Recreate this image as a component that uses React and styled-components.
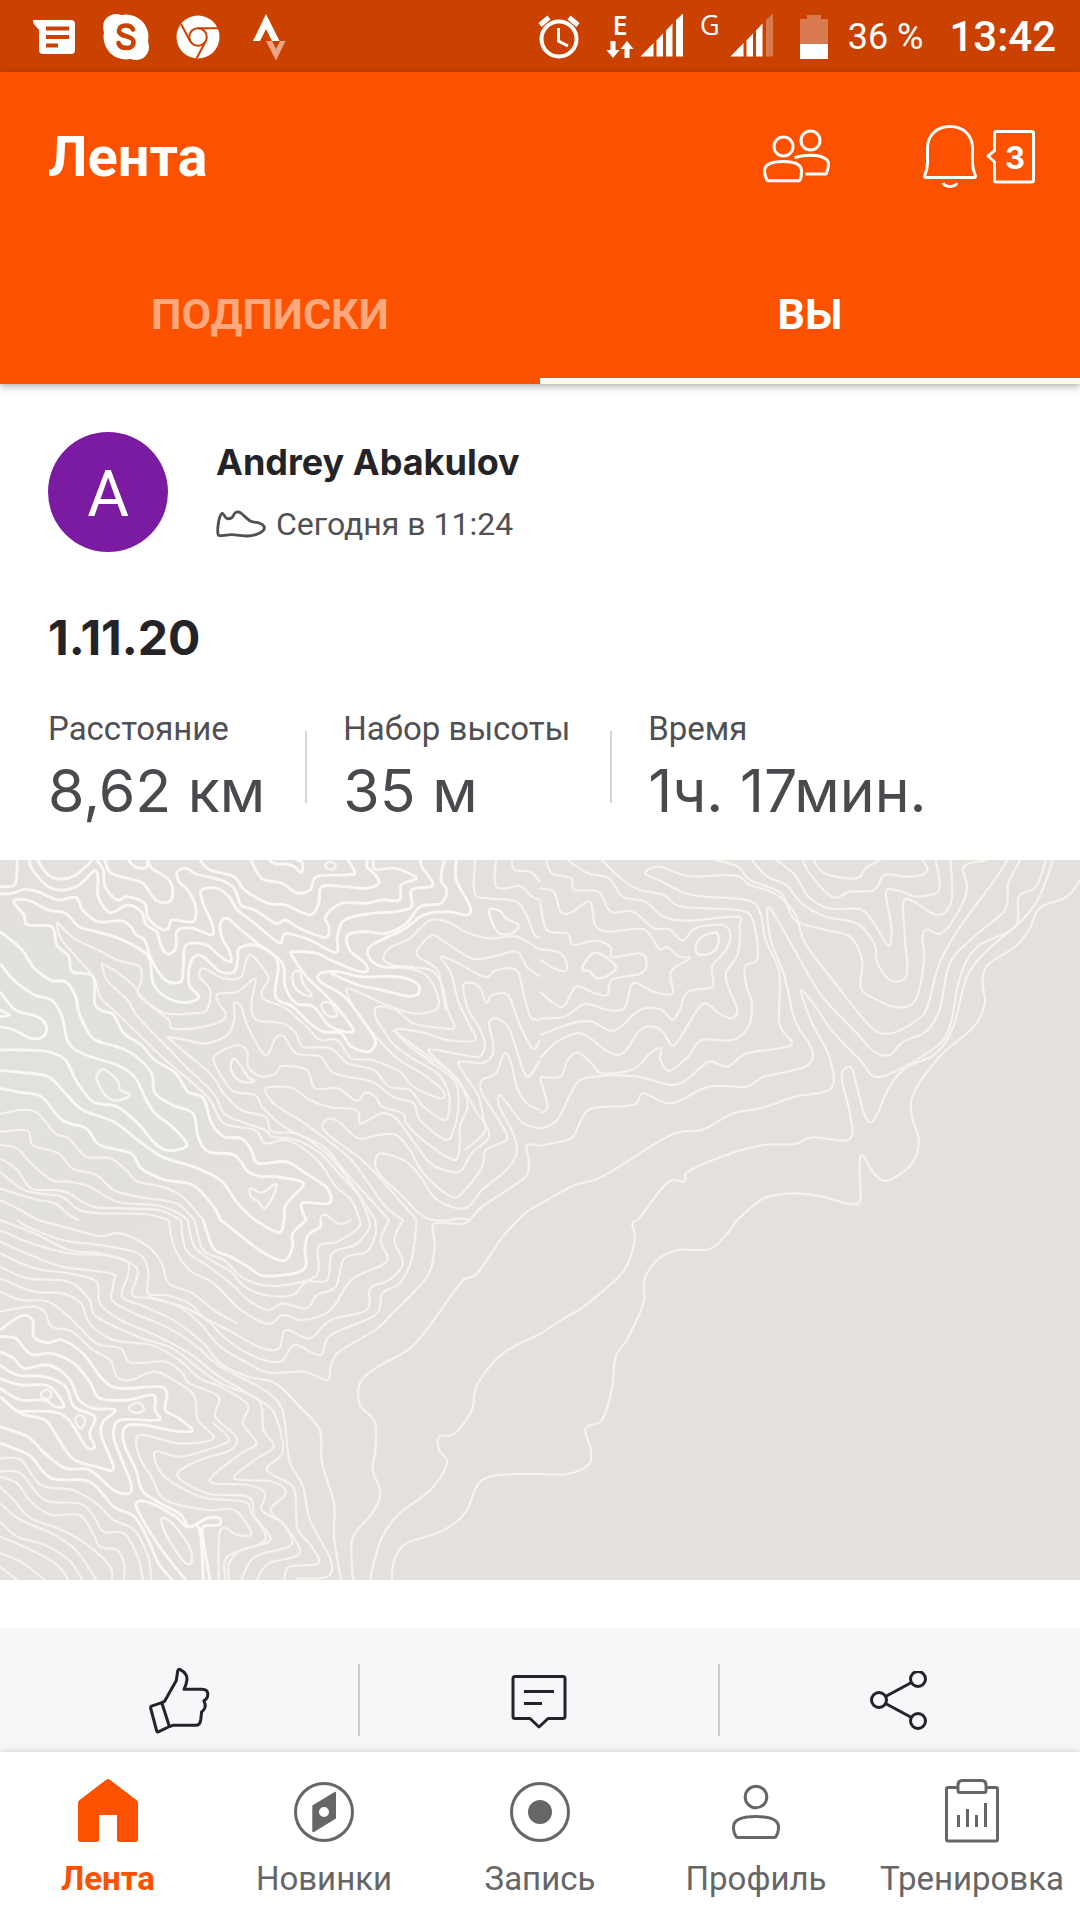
import React from "react";
import styled, { createGlobalStyle } from "styled-components";

const GlobalStyle = createGlobalStyle`
  * { box-sizing: border-box; }
  body {
    margin: 0;
    background: #ffffff;
    font-family: Roboto, "Noto Sans", sans-serif;
    color: #505054;
  }
  h1, h2, h3, p, dl, dd, dt { margin: 0; }
  button { border: 0; padding: 0; background: none; font: inherit; color: inherit; cursor: pointer; }
  a { color: inherit; text-decoration: none; }
  svg { display: block; flex: none; }
`;

const Screen = styled.div`
  display: flex;
  flex-direction: column;
  min-height: 100vh;
`;

/* ---------- status bar ---------- */

const StatusBar = styled.div`
  display: flex;
  align-items: center;
  justify-content: space-between;
  height: 72px;
  padding: 2px 24px 0 32px;
  background: #cb4200;
  color: #ffffff;
`;

const StatusGroup = styled.div`
  display: flex;
  align-items: center;
  gap: ${(p) => p.$gap}px;
`;

const Network = styled.div`
  display: flex;
  align-items: flex-start;
  gap: ${(p) => p.$gap}px;
  height: 48px;
`;

const NetworkType = styled.div`
  display: flex;
  flex-direction: column;
  align-items: center;
  gap: 4px;
  font: ${(p) => p.$weight} 27px/24px "Open Sans", sans-serif;
`;

const BatteryLevel = styled.span`
  font-size: 36px;
  line-height: 44px;
`;

const Clock = styled.time`
  font-size: 42px;
  font-weight: 500;
  line-height: 44px;
`;

/* ---------- app header ---------- */

const Header = styled.header`
  position: relative;
  background: #fc5200;
  color: #ffffff;
  box-shadow: 0 2px 8px rgba(0, 0, 0, 0.35);
`;

const Toolbar = styled.div`
  display: flex;
  align-items: center;
  justify-content: space-between;
  height: 168px;
  padding: 2px 44px 0 48px;
`;

const Title = styled.h1`
  font-size: 56px;
  font-weight: 700;
  line-height: 64px;
`;

const ToolbarActions = styled.div`
  display: flex;
  align-items: center;
  gap: 90px;
`;

const ToolbarButton = styled.button`
  display: flex;
  align-items: center;
  gap: 8px;
`;

const Badge = styled.span`
  display: grid;
  place-items: center;
  > * { grid-area: 1 / 1; }
`;

const BadgeCount = styled.span`
  padding: 2px 0 0 8px;
  font: 700 31px/36px Inter, sans-serif;
`;

const Tabs = styled.div`
  display: flex;
`;

const Tab = styled.button`
  flex: 1;
  height: 144px;
  padding-top: 10px;
  font-size: 43px;
  font-weight: 700;
  line-height: 48px;
  color: ${(p) => (p.$active ? "#ffffff" : "#ffa87e")};
  border-bottom: 6px solid ${(p) => (p.$active ? "#ffffff" : "transparent")};
`;

/* ---------- activity ---------- */

const Activity = styled.article`
  display: flex;
  flex-direction: column;
  flex: 1;
`;

const Athlete = styled.div`
  display: flex;
  align-items: center;
  gap: 48px;
  padding: 48px 48px 0;
`;

const Avatar = styled.div`
  display: grid;
  place-items: center;
  width: 120px;
  height: 120px;
  border-radius: 50%;
  background: #7b1ba2;
  color: #ffffff;
  font-size: 64px;
  line-height: 64px;
  padding-top: 6px;
`;

const AthleteText = styled.div`
  display: flex;
  flex-direction: column;
  gap: 20px;
`;

const AthleteName = styled.h2`
  font: 700 36px/44px Inter, sans-serif;
  color: #242428;
`;

const Meta = styled.p`
  display: flex;
  align-items: center;
  gap: 10px;
  font-size: 32px;
  line-height: 40px;
`;

const ActivityTitle = styled.h3`
  padding: 56px 48px 0;
  font: 700 48px/60px Inter, sans-serif;
  color: #242428;
`;

const Stats = styled.dl`
  display: flex;
  align-items: center;
  padding: 41px 48px 35px;
`;

const Stat = styled.div`
  display: flex;
  flex-direction: column;
  gap: 8px;
  & + & {
    padding-left: 38px;
    margin-left: 40px;
    background: linear-gradient(#d4d4d6, #d4d4d6) 0 22px / 2px 72px no-repeat;
  }
`;

const StatLabel = styled.dt`
  font-size: 33px;
  line-height: 40px;
`;

const StatValue = styled.dd`
  font: 400 59px/68px Inter, sans-serif;
  color: #4a4a4e;
`;

const MapLink = styled.a`
  display: block;
  background: #e3e0dd;
  > svg { width: 100%; height: auto; }
`;

const Actions = styled.div`
  display: flex;
  height: 124px;
  margin-top: 48px;
  background: #f7f7fa;
`;

const Action = styled.button`
  flex: 1;
  display: flex;
  align-items: center;
  justify-content: center;
  padding: 22px 2px 0 0;
  color: #242428;
  &:not(:last-child) { background: linear-gradient(#cbcbce, #cbcbce) 100% 36px / 2px 72px no-repeat; }
`;

/* ---------- bottom navigation ---------- */

const BottomNav = styled.nav`
  display: flex;
  position: relative;
  height: 168px;
  padding-top: 26px;
  background: #ffffff;
  box-shadow: 0 -1px 6px rgba(0, 0, 0, 0.14);
`;

const NavItem = styled.a`
  flex: 1 1 0;
  min-width: 0;
  display: flex;
  flex-direction: column;
  align-items: center;
  gap: 15px;
  font-size: 33px;
  line-height: 40px;
  font-weight: ${(p) => (p.$active ? 700 : 400)};
  color: ${(p) => (p.$active ? "#fc5200" : "#666666")};
`;

/* ---------- curves ---------- */

// Turns "x,y x,y ..." into a smooth path through every point.
function curve(text, closed) {
  const pts = text.split(" ").map((pair) => pair.split(",").map(Number));
  const n = pts.length;
  const at = (i) => (closed ? pts[(i + n) % n] : pts[Math.max(0, Math.min(n - 1, i))]);
  let d = `M${pts[0][0]},${pts[0][1]}`;
  for (let i = 0; i < (closed ? n : n - 1); i++) {
    const [a, b, c, e] = [at(i - 1), at(i), at(i + 1), at(i + 2)];
    d += `C${b[0] + (c[0] - a[0]) / 6},${b[1] + (c[1] - a[1]) / 6} ${c[0] - (e[0] - b[0]) / 6},${c[1] - (e[1] - b[1]) / 6} ${c[0]},${c[1]}`;
  }
  return closed ? d + "Z" : d;
}

const tiles = [
  {
    x: 0, y: 0,
    strong: [
      "0,80 20,80 45,70 50,0",
      "0,102 35,100 70,88 110,95 170,120 220,112 240,150 285,185 350,182 380,200 395,225 420,240 440,300 480,360 525,365 532,320 535,270 550,250 600,255 640,290 670,305 665,270 645,235 640,190 660,175 700,210 760,260 820,310 828,380 860,430 910,440 960,500 1025,515 1000,470 950,410 890,350 850,290 850,275 920,280 960,300 1030,330 1065,335 1060,310 1015,270 1010,225 1060,215 1120,220 1180,190 1220,140 1280,130 1298,90 1280,60 1290,0",
      "85,0 95,30 140,80 185,90 230,75 275,32 285,60 285,110 320,158 370,135 410,155 425,195 455,215 465,250 485,282 510,265 515,212 560,205 615,225 615,190 590,130 585,90 630,85 665,110 690,150 740,190 810,248 830,220 900,240 975,278 980,230 1000,180 1080,160 1150,155 1195,140 1195,90 1250,80 1255,65 1225,20 1220,0",
      "108,0 140,45 175,57 215,48 258,12 265,0",
      "280,0 300,30 305,80 340,120 370,110 420,130 430,175 470,208 490,205 500,180 560,185 568,140 545,90 520,65 515,35 540,25 570,42 640,60 680,85 700,135 740,150 800,190 830,180 870,205 945,232 955,200 945,170 990,130 1060,130 1110,120 1160,120 1165,75 1200,60 1205,50 1150,25 1090,28 1085,0",
      "305,0 320,38 370,55 415,70 455,122 495,122 500,80 480,50 440,25 430,0",
      "372,0 395,22 425,22 428,0",
      "300,455 275,430 270,350 210,335 200,290 165,255 150,200 80,195 70,165 40,125 80,120 140,150 190,160 230,200 280,215 345,235 410,270 435,300 445,370 480,410 535,428 578,412 550,375 550,320 565,290 590,290 640,335 680,335 690,300 695,265 740,255 790,280 808,320 800,410 850,440 900,490 940,515 990,520 1020,560 1070,575 1090,545 1060,490 1000,410 930,365 930,340 980,335 1050,350 1150,350 1210,370 1215,400 1180,408 1110,390 1040,375 960,340",
      "300,455 330,465 360,520 410,555 450,600 510,640 545,695 590,715 615,790 650,830 700,835 730,870 750,910 830,905 880,935 950,985 955,1030 880,1028 880,1060 890,1080",
      "0,215 60,265 100,325 150,362 190,365 220,410 230,460 270,535 340,560 390,585 440,640 450,700 500,735 560,760 575,830 605,875 680,885 720,935 760,950 800,950 880,968 850,1010 828,1040 825,1080",
      "0,310 40,360 100,405 150,420 180,470 200,550 250,585 340,615 390,650 420,710 450,760 500,800 543,855 490,872 450,850 400,790 340,740 270,725 220,660 190,600 140,575 70,570 0,570",
      "0,395 45,450 110,470 135,500 125,530 90,535 40,510 0,500",
      "0,450 28,465 0,470",
      "0,632 60,637 140,650 190,700 240,750 330,785 400,840 470,890 560,920 640,960 690,1030 740,1080",
      "0,685 60,697 120,710 180,780 250,805 290,855 380,880 410,925 480,960 560,975 620,1040 640,1080",
      "728,0 760,55 820,70 860,98 900,90 920,50 1000,45 1030,38 1010,0",
      "780,0 800,12 830,12 855,20 875,38 878,8 860,0",
      "580,0 610,30 680,50 710,90 780,130 830,135 900,165 925,130 935,80 1000,80 1060,85 1100,70 1090,45 1065,20 1068,0",
      "1325,0 1325,60 1365,140 1355,165 1300,155 1230,165 1170,210 1080,255 1070,290 1110,320 1200,320",
    ],
    thin: [
      "165,185 215,235 285,270 340,300 405,320 410,365 400,400 440,440 490,480 500,505 560,505 640,485 655,460 635,430 632,402 690,395 740,355 735,400 730,440 745,480 820,490 860,520 880,560 960,565 1010,610 1085,630 1130,680 1190,690 1225,735 1290,780 1305,740 1300,690 1270,640 1190,590 1140,550 1110,505 1090,470 1095,440 1150,450 1200,490 1290,505 1320,500 1300,450 1285,380 1250,330 1160,320 1115,300 1130,265 1190,235 1250,180 1310,190 1350,215 1420,235 1500,230 1568,270",
      "165,185 180,240 270,350 290,410 340,460 400,520 470,590 560,670 610,720 650,790 740,810 770,850 830,840 880,865 930,910 975,980 1020,1020 1045,1080",
      "295,310 345,340 390,380 420,420 480,460 560,460 600,450 610,390 580,350 590,325 650,355 700,350 715,300 730,285 760,320 780,355 760,395 770,420 830,445 890,500 930,540 980,540 1020,595 1080,600 1160,635 1200,680 1280,715 1285,690 1225,640 1160,600 1100,540 1060,490 1015,420 1010,385 1060,405 1110,430 1200,460 1270,445 1265,390 1230,340 1160,320",
      "295,310 310,360 370,420 400,470 470,545 540,620 620,700 650,760 700,785 770,810 790,830 860,840 930,880 980,935 1040,1005 1072,1080",
      "485,530 540,540 600,550 660,525 680,480 680,430 700,440 720,500 770,585 800,535 825,530 860,580 930,590 970,640 1080,665 1140,710 1200,730 1220,780 1295,840 1320,800 1330,750 1330,690 1310,650 1240,600",
      "485,530 540,580 610,640 650,700 700,750 770,770 790,815 860,820 930,865 980,915 1030,985 1065,1040 1090,1080",
      "760,740 740,705 680,695 650,660 620,600 640,575 690,555 718,575 720,620 760,650 800,640 820,618 890,630 915,685 980,685 1035,722 1060,698 1090,710 1110,740 1170,760 1180,790 1240,850 1320,900 1335,850 1335,800 1358,740 1345,690 1310,640 1220,570 1140,510",
      "760,740 810,790 860,820 940,860 990,920 1050,990 1130,1080",
      "1170,1080 1120,1040 1070,970 1020,900 950,840 870,780 800,735 770,690 800,680 850,685 900,720 960,742 1035,750 1045,790 1070,780 1110,760 1150,775 1190,830 1250,910 1310,935 1340,930 1370,880 1420,830 1405,780 1390,710 1360,660 1330,610 1360,605 1400,610 1430,585 1430,540 1420,490 1440,475 1475,500 1500,570 1530,650 1568,600",
      "1210,1080 1150,1010 1100,950 1040,890 960,830 935,795 960,775 990,790 1040,835 1100,825 1150,825 1190,870 1230,940 1310,1010 1350,990 1400,920 1410,870 1470,840 1460,800 1400,700 1400,660 1440,640 1465,580 1485,610 1500,680 1530,730 1568,750",
      "1365,1080 1330,1075 1290,1082 1230,1070 1160,1000 1100,940 1090,900 1110,880 1180,905 1220,950 1270,1020 1350,1045 1400,990 1470,930 1500,880 1490,820 1450,740 1450,705 1480,740 1520,790 1568,805",
      "1365,1080 1400,1040 1480,985 1530,945 1535,900 1530,855 1568,858",
      "1505,1080 1530,1055 1568,1032",
      "930,1080 935,1066 950,1066 965,1080",
      "0,762 60,750 110,760 160,820 200,835 250,890 320,895 370,935 400,965 470,980 530,1010 590,1080",
      "0,815 80,812 95,855 170,880 210,925 280,945 330,990 400,1010 510,1030 565,1080",
      "0,855 50,865 90,910 150,960 200,965 260,980 340,1025 450,1035 510,1055 545,1080",
      "0,895 50,930 90,985 160,990 200,1000 270,1040 360,1045 460,1050 525,1080",
      "0,935 60,985 110,1000 180,1010 230,1050 300,1060 420,1062 490,1080",
      "0,985 60,1005 110,1020 160,1030 200,1065 230,1080",
      "0,1020 50,1045 110,1080",
      "1295,450 1285,400 1270,330 1215,290 1215,265 1255,225 1290,245 1370,295 1430,290 1500,275 1530,320 1568,350",
      "1260,610 1180,550 1150,508 1230,518 1300,540 1380,540 1360,490 1330,420 1310,340 1280,290 1330,310 1410,352 1440,330 1500,330 1520,400 1540,470 1568,480",
      "1350,870 1410,810 1380,750 1330,660 1270,600 1245,568 1320,580 1390,590 1408,550 1390,500 1360,450 1345,380 1365,368 1395,385 1412,428 1430,405 1475,405 1500,470 1530,540 1550,568 1568,540",
      "1380,0 1378,100 1420,115 1500,125 1530,170 1550,220 1568,235",
      "1440,0 1438,75 1470,85 1510,78 1545,110 1568,120",
      "1485,0 1495,30 1540,35 1568,65",
    ],
    closed: [
      "280,650 300,628 340,660 350,690 378,705 340,722 310,710 290,680",
      "728,985 762,998 800,972 795,1005 768,1045 750,1025 728,1010",
      "850,340 870,335 880,370 905,405 885,405 855,380",
      "935,430 960,430 980,465 960,470 940,455",
      "945,15 958,5 974,15 968,28 950,25",
      "680,595 700,620 720,650 738,665 700,665 675,640 670,615",
      "1420,150 1450,152 1470,175 1505,195 1490,218 1455,222 1435,200",
    ],
  },
  {
    x: 540, y: 0,
    strong: [],
    thin: [
      "18,0 35,40 90,55 100,90 170,95 205,155 270,155 330,205 375,207 415,242 450,205 530,195 553,225 540,270 500,320 500,380 430,395 405,450 385,480 350,448 290,450 215,512 150,485 90,490 0,525",
      "0,85 40,95 60,155 90,158 145,125 160,195 200,215 300,208 345,265 370,262 405,290 435,295 380,335 385,400 330,395 270,370 245,445 190,448 130,432 70,470 0,475",
      "0,125 20,210 80,220 95,255 160,242 205,262 210,292 290,280 310,310 290,342 210,358 195,405 160,400 105,380 70,438 40,430 0,395",
      "0,268 50,275 75,300 75,332 40,325 0,298",
      "80,0 140,40 200,55 240,110 305,125 360,170 430,182 570,170 580,200 575,280 540,340 550,390 573,450 555,475 520,460 480,430 450,460 390,555 360,520 330,500 290,510 240,580 190,570 120,520 50,545 0,595",
      "178,0 240,60 290,90 360,105 410,140 550,148 610,165 630,240 630,300 595,320 600,380 615,430 605,500 560,540 470,540 430,590 375,632 350,600 350,565 320,580 270,628 180,640 150,610 110,578 80,600 60,650 0,650",
      "0,655 22,740 0,758",
      "1358,0 1320,60 1220,200 1160,310 1125,440 1095,480 1020,520 960,500 850,360 770,250 740,160 680,100 610,75 580,50 540,45 430,48 345,20 305,40 345,60 440,105 600,120 640,160 655,240 695,340 695,490 728,555 600,580 545,620 490,605 430,655 380,675 270,648 130,655 90,700 50,780 0,808",
      "510,0 575,20 610,60 700,100 740,180 830,210 900,230 935,300 932,385 980,420 1035,442 1090,420 1115,300 1110,230 1125,208 1160,222 1200,180 1240,90 1230,20 1300,0",
      "615,0 660,50 715,75 760,130 830,170 920,190 970,250 980,310 1020,362 1065,345 1060,240 1055,130 1080,122 1155,165 1195,120 1192,0",
      "685,0 740,45 780,110 840,145 930,148 970,190 1012,258 1020,200 1005,95 1050,95 1095,110 1155,95 1158,50 1148,0",
      "762,0 790,50 850,112 900,95 970,90 1000,45 1060,50 1110,45 1125,25 1110,0",
      "793,0 830,42 920,55 945,25 988,0",
      "0,857 90,835 115,790 150,745 270,735 300,700 380,730 490,680 600,680 650,650 770,620 790,570 740,480 710,350 670,240 660,145 690,180 750,290 820,410 920,520 970,575 1015,585 1055,545 1120,515 1160,450 1190,310 1260,230 1350,150 1360,70 1395,0",
      "0,1032 100,975 180,950 380,825 470,810 560,760 640,745 740,710 845,685 840,590 790,490 757,390 800,440 850,515 930,600 970,650 1040,630 1150,560 1190,500 1220,350 1270,260 1380,200 1390,110 1440,80 1470,0",
      "285,1080 370,968 420,965 430,935 540,885 650,855 740,852 790,832 898,838 900,760 878,670 880,630 905,625 920,680 945,770 970,780 1010,690 1060,625 1150,580 1200,500 1240,350 1300,270 1400,180 1450,110 1490,0",
      "1568,60 1530,110 1450,145 1420,210 1380,260 1300,315 1285,370 1292,430 1260,500 1160,590 1085,700 1080,770 1100,840 1080,910 1010,962 970,940 935,885 928,930 930,1020 900,1032 820,1010 740,1000 650,1015 572,1080",
    ],
    closed: [
      "160,278 220,318 200,345 165,355 145,335 122,325",
      "455,250 480,225 515,220 515,260 490,282 455,280",
    ],
  },
  {
    x: 0, y: 360,
    strong: [
      "640,0 690,40 760,95 825,122 850,80 850,40 890,0",
      "740,0 810,38 825,0",
      "590,0 620,85 670,110 720,140 770,168 880,150 885,85 895,45 930,20 930,0",
      "0,330 60,288 95,300 98,350 140,368 180,360 240,400 300,480 350,505 460,500 485,520 480,570 520,595 558,632 500,632 420,615 365,620 360,670 395,750 420,820 520,880 550,920 600,895 637,895 635,915 590,920 590,960 610,1080",
      "0,350 45,355 90,403 150,400 215,430 260,485 290,535 370,540 445,525 450,570 462,600 380,598 340,605 330,650 350,710 380,790 375,820 330,810 260,750 190,745 130,700 80,650 0,620",
      "0,395 40,415 70,445 140,435 200,475 230,540 270,565 335,570 300,605 295,650 330,745 280,740 210,715 160,640 130,600 60,580 0,530",
      "0,435 50,465 130,470 190,500 215,560 275,590 260,640 275,680 250,680 200,600 150,575 50,575",
      "0,475 60,495 140,498 185,555 160,560 130,540 60,540 0,505",
      "590,1080 580,930 540,920 510,890 440,850 400,845 400,870 450,960 500,1030 540,1080",
      "0,670 40,685 90,710 150,775 260,785 330,860 390,890 430,960 460,1030 500,1080",
    ],
    thin: [
      "1505,0 1460,50 1385,160 1340,185 1260,300 1190,385 1090,445 1045,490 1045,555 1088,605 1090,690 1082,750 1105,820 1080,880 1030,940 1020,990 1025,1080",
      "1568,342 1460,400 1385,495 1370,570 1320,640 1275,650 1275,690 1298,730 1250,810 1160,880 1110,950 1085,1030 1075,1080",
      "1568,762 1450,765 1390,790 1350,880 1280,935 1180,970 1145,1020 1137,1080",
      "1365,0 1340,12 1260,12 1262,80 1240,170 1140,280 1090,330 985,395 960,440 950,480 880,455 780,458 720,430 640,380 580,310 520,260 440,235 385,225 400,160 380,130 290,100 200,90 100,40 0,0",
      "565,0 590,90 650,120 700,170 760,195 830,195 920,165 925,80 980,65 1040,25 1045,0",
      "545,0 565,80 620,125 670,155 710,200 770,225 850,225 890,185 950,180 965,100 1030,75 1070,30 1072,0",
      "525,0 540,90 600,135 670,190 720,240 780,270 820,250 890,265 920,225 975,200 1000,115 1065,95 1090,45 1090,0",
      "490,0 505,80 550,150 620,190 700,270 780,312 820,285 880,300 960,270 1020,180 1110,135 1125,110 1105,60 1130,0",
      "965,0 990,12 1020,0",
      "1170,0 1145,60 1170,130 1130,180 1075,205 1065,270 960,300 900,355 830,330 810,385 760,385 680,340 590,290 550,250 480,225 430,220 430,150 400,100 290,75 180,60 80,20 50,0",
      "110,0 200,25 290,48 350,40 430,80 470,130 490,190 560,220 620,270 690,310",
      "1210,0 1195,120 1160,190 1110,220 1090,285 960,345 930,405 855,375 815,425 740,410 660,360 600,300 530,260 430,230",
      "0,30 90,70 200,100 300,105 370,125 370,170 355,230 420,260 510,305 590,370 640,430 720,470 800,490 870,560 928,630 935,730 970,850 970,950 990,1080",
      "0,65 100,110 180,140 320,160 330,185 325,240 380,275 480,320 560,370 640,440 760,505 820,570 840,720 880,800 900,900 960,1020 950,1070 860,1075",
      "0,100 100,145 200,160 280,185 290,250 350,300 450,345 550,400 630,465 720,520 790,570 815,640 820,700 775,750 850,800 860,870 865,930 905,980 925,1030 840,1040 825,1080",
      "0,140 80,175 200,185 260,240 280,290 400,350 500,385 570,440 640,490 750,540 765,630 795,680 740,720 680,775 790,785 830,820 785,870 830,920 870,1000 780,1030 745,1080",
      "0,175 100,215 180,220 235,250 260,310 330,360 440,375 520,420 580,475 640,500 720,555 705,610 745,670 700,700 620,765 620,790 720,795 770,820 760,870 820,910 845,975 740,1010 700,1080",
      "0,215 60,240 140,245 210,300 280,370 350,385 380,428 480,425 530,460 550,490 635,530 625,590 685,650 670,690 580,720 515,765 600,820 720,830 740,890 785,960 700,990 665,1030 665,1080",
      "0,275 50,265 100,260 130,275 150,320 210,335 270,390 320,420 340,470 380,480 450,455 520,490 565,530 575,600 620,655 520,670 405,645 405,710 440,770 480,840 600,870 680,870 730,940 690,945 640,930 635,1080",
      "655,1080 660,1010 770,960 730,880 710,845 600,835 520,800 465,755 450,695 520,710 600,690 665,660 620,610",
      "0,715 60,720 120,795 210,810 280,850 330,900 390,930 430,1010 440,1080",
      "0,755 60,760 130,840 230,850 270,885 300,935 360,940 400,1010 415,1080",
      "0,770 50,790 90,845 150,885 230,885 270,940 290,980 340,990 360,1030 360,1080",
      "0,800 40,840 90,895 180,930 260,980 320,1040 325,1080",
      "0,850 60,900 150,940 220,990 280,1080",
      "0,905 50,950 130,975 200,1020 240,1080",
      "0,950 80,985 160,1030 200,1080",
      "0,1000 60,1025 130,1080",
      "0,1040 50,1080",
    ],
    closed: [
      "120,520 135,508 150,520 140,536 123,532",
      "218,600 232,585 248,600 235,625",
      "375,560 400,548 418,565 405,578 380,574",
      "470,895 500,910 550,980 555,1030 530,1020 480,940",
    ],
  },
  {
    x: 540, y: 360,
    strong: [],
    thin: [
      "285,0 268,12 275,60 245,150 180,215 120,265 70,295 0,342",
      "572,0 540,45 490,88 400,90 340,120 303,180 300,250 255,355 220,410 208,510 180,600 132,625 148,690 140,735 80,762 0,762",
    ],
    closed: [],
  },
];

function ContourMap() {
  return (
    <svg viewBox="0 0 1080 720" fill="none" strokeLinejoin="round">
      <defs>
        <radialGradient id="meadow" cx="0" cy="0.3" r="0.3">
          <stop offset="0" stopColor="#e1e1dd" />
          <stop offset="1" stopColor="#e3e0dd" />
        </radialGradient>
      </defs>
      <rect width="1080" height="720" fill="url(#meadow)" />
      {tiles.map((t) => (
        <g key={`${t.x}-${t.y}`} transform={`translate(${t.x} ${t.y}) scale(${540 / 1568} ${1 / 3})`}>
          <g stroke="#f6f3ef" strokeWidth="6.500">
            {t.thin.map((line) => <path key={line} d={curve(line)} />)}
          </g>
          <g stroke="#faf8f5" strokeWidth="8.500">
            {t.strong.map((line) => <path key={line} d={curve(line)} />)}
          </g>
          <g stroke="#f7f5f1" strokeWidth="7">
            {t.closed.map((line) => <path key={line} d={curve(line, true)} />)}
          </g>
        </g>
      ))}
    </svg>
  );
}

/* ---------- icons ---------- */

const MessageIcon = () => (
  <svg width="44" height="36" viewBox="0 0 44 36">
    <path fill="#fff" d="M1 1H39Q43 1 43 5V31Q43 35 39 35H11Q7 35 7 31V11L1 4Z" />
    <path stroke="#cb4200" strokeWidth="4" d="M14 9.500H37M14 18H37M14 26.500H26" />
  </svg>
);

const SkypeIcon = () => (
  <svg width="48" height="48" viewBox="0 0 48 48">
    <circle cx="14" cy="14" r="13" fill="#fff" />
    <circle cx="34" cy="34" r="13" fill="#fff" />
    <circle cx="24" cy="24" r="22.500" fill="#fff" />
    <path d="M31 16.500C29.500 13.500 27 12.500 24 12.500C19.500 12.500 17 14.500 17 17.500C17 21 20 22 24.500 23.200C29.500 24.500 31.500 26 31.500 29.500C31.500 33 28.500 35 24.500 35C20.500 35 17.500 33.500 16.500 30" fill="none" stroke="#cb4200" strokeWidth="4.600" strokeLinecap="round" />
  </svg>
);

const ChromeIcon = () => (
  <svg width="44" height="44" viewBox="0 0 44 44">
    <circle cx="22" cy="22" r="21.500" fill="#fff" />
    <g fill="none" stroke="#cb4200" strokeWidth="2">
      <circle cx="22" cy="22" r="8.800" />
      <path d="M22 13.200H42M14.400 26.500L5 9M29.600 26.500L20.500 43.500" />
    </g>
  </svg>
);

const StravaIcon = () => (
  <svg width="40" height="48" viewBox="-6 0 40 48">
    <path fill="#fff" d="M14 1L27.500 28H20L14 16L8 28H1Z" />
    <path fill="#eda58a" d="M14 28H20L24 36L28 28H33.500L24 47.500Z" />
  </svg>
);

const AlarmIcon = () => (
  <svg width="42" height="46" viewBox="0 0 42 46" fill="none" stroke="#fff">
    <circle cx="21" cy="25" r="17.500" strokeWidth="4" />
    <path strokeWidth="5" d="M2 11L11 3.500M40 11L31 3.500" />
    <path strokeWidth="3" d="M20.500 14V27L30 32" />
  </svg>
);

const DataArrows = () => (
  <svg width="28" height="18" viewBox="0 0 28 18" fill="#fff">
    <path d="M4.500 0H9.500V9H13.500L7 17L0.500 9H4.500Z" />
    <path d="M18.500 17H23.500V8H27.500L21 0L14.500 8H18.500Z" />
  </svg>
);

const SignalIcon = ({ weak }) => (
  <svg width="44" height="44" viewBox="0 0 44 44" fill="#fff">
    <path d="M0.500 43.500L13.500 30V43.500ZM16.500 27.500L23 20.500V43.500H16.500ZM26 17.500L32.500 10.500V43.500H26Z" />
    <path fill={weak ? "#da7a50" : "#fff"} d="M36 7L43 0.500V43.500H36Z" />
  </svg>
);

const BatteryIcon = () => (
  <svg width="28" height="44" viewBox="0 0 28 44">
    <path fill="#da7a50" d="M7 0H21V4H28V29H0V4H7Z" />
    <path fill="#fff" d="M0 29H28V44H0Z" />
  </svg>
);

const PeopleIcon = () => (
  <svg width="70" height="58" viewBox="0 0 70 58" fill="none" stroke="#fff" strokeWidth="3" strokeLinejoin="round">
    <circle cx="21.500" cy="18.500" r="9.500" />
    <circle cx="48.500" cy="12.500" r="9.500" />
    <path d="M2.500 43C2.500 36 10 33.500 21 33.500S39.500 36.500 39.500 43C39.500 47 39 50 38 52Q37.500 52.800 36.500 52.800H7Q5.500 52.800 5 52C3.500 49 2.500 46 2.500 43Z" />
    <path d="M32.500 30C37 28 42 27.300 48.500 27.300C59 27.300 66.500 30.500 66.500 36C66.500 40 65.500 43 64 46H43.500" />
  </svg>
);

const BellIcon = () => (
  <svg width="56" height="68" viewBox="0 0 56 68" fill="none" stroke="#fff" strokeWidth="3" strokeLinejoin="round">
    <path d="M28 3.500C14 3.500 5.500 13 5.500 25V40C5.500 46 3.500 50 2.500 53Q2.500 54.500 4 54.500H52Q53.500 54.500 53.500 53C52.500 50 50.500 46 50.500 40V25C50.500 13 42 3.500 28 3.500Z" />
    <path d="M21 60C23 64.500 33 64.500 35 60" />
  </svg>
);

const BadgeFrame = () => (
  <svg width="50" height="56" viewBox="0 0 50 56" fill="none" stroke="#fff" strokeWidth="3" strokeLinejoin="round">
    <path d="M8.500 21.500V4.500Q8.500 2.500 10.500 2.500H45.500Q47.500 2.500 47.500 4.500V51Q47.500 53 45.500 53H10.500Q8.500 53 8.500 51V33L2 27Z" />
  </svg>
);

const ShoeIcon = () => (
  <svg width="50" height="30" viewBox="215 510 50 30" fill="none" stroke="#505054" strokeWidth="2.800" strokeLinejoin="round">
    <path d={curve("217,535 217,527 218.700,518.300 221.400,514.300 225.500,519.300 230.700,518.700 234,514 237.600,513 241,515 249.700,522.300 258.300,524 263,527.300 262,531.700 254.800,535.700 246.200,537 230.700,535.700 219,536.700", true)} />
  </svg>
);

const ThumbIcon = () => (
  <svg width="62" height="70" viewBox="0 0 62 70" fill="none" stroke="currentColor" strokeWidth="3" strokeLinejoin="round">
    <path d="M13.800 36.700L3.500 40.200Q2.300 40.700 2.600 42L8.700 65Q9 66.300 10.300 65.900L21.400 60.500Z" />
    <path d="M13.800 36.700L16.600 35.300L28.300 14.500L29.700 5Q30.200 2.600 32.200 3.600Q39.500 7.500 39 13.500Q38.500 18 36 23.300H54Q59.600 23.300 59.800 28Q59.800 33 55.900 34.700Q59.500 41.500 53.600 46L52.800 53.500Q52 59.300 48 59.300H25L21.400 60.500" />
  </svg>
);

const CommentIcon = () => (
  <svg width="58" height="60" viewBox="0 0 58 60" fill="none" stroke="currentColor" strokeWidth="3" strokeLinejoin="round">
    <path d="M5 5.500H53Q55 5.500 55 7.500V45.500Q55 47.500 53 47.500H38L29 56L20 47.500H5Q3 47.500 3 45.500V7.500Q3 5.500 5 5.500Z" />
    <path d="M14 20.500H44M14 32.500H32" />
  </svg>
);

const ShareIcon = () => (
  <svg width="58" height="60" viewBox="0 0 58 60" fill="none" stroke="currentColor" strokeWidth="3">
    <circle cx="9" cy="29" r="7.500" />
    <circle cx="48" cy="8" r="7.500" />
    <circle cx="48" cy="50" r="7.500" />
    <path d="M15.500 25.500L41.500 11.500M15.500 32.500L41.500 46.500" />
  </svg>
);

const NavIcon = ({ children }) => (
  <svg width="64" height="66" viewBox="0 0 64 66" fill="none" stroke="currentColor" strokeWidth="3" strokeLinejoin="round">
    {children}
  </svg>
);

const HomeShape = () => (
  <path fill="currentColor" stroke="none" d="M30.500 1.500Q32 0.500 33.500 1.500L61 22.500Q62 23.500 62 25V61.500Q62 64 59.500 64H43.500Q41 64 41 61.500V37H23V61.500Q23 64 20.500 64H4.500Q2 64 2 61.500V25Q2 23.500 3 22.500Z" />
);

const CompassShape = () => (
  <>
    <circle cx="32" cy="34" r="28.500" />
    <path fill="currentColor" stroke="none" fillRule="evenodd" d="M20.300 27.500L42.500 14Q44 13.300 44 15V40.500L22 54Q20.300 54.700 20.300 53ZM32 29A5 5 0 1 0 32 39A5 5 0 1 0 32 29Z" />
  </>
);

const RecordShape = () => (
  <>
    <circle cx="32" cy="34" r="28.500" />
    <circle cx="32" cy="34" r="12" fill="currentColor" stroke="none" />
  </>
);

const ProfileShape = () => (
  <>
    <circle cx="32" cy="19" r="10.800" />
    <path d="M9.500 49C9.500 41 19 38.500 32 38.500S54.500 41 54.500 49C54.500 53 53.500 56.500 51.500 59Q51 59.500 50 59.500H14Q13 59.500 12.500 59C10.500 56.500 9.500 53 9.500 49Z" />
  </>
);

const TrainingShape = () => (
  <>
    <path d="M18 9.500H8Q6.500 9.500 6.500 11V61.500Q6.500 63 8 63H56Q57.500 63 57.500 61.500V11Q57.500 9.500 56 9.500H46" />
    <path d="M21.500 2.500H42.500Q46 3 46 7V13Q46 14.500 44.500 14.500H19.500Q18 14.500 18 13V7Q18 3 21.500 2.500Z" />
    <path d="M18.500 37V49M27.500 31V49M36.500 37V49M45.500 25V49" />
  </>
);

const stats = [
  ["Расстояние", "8,62 км"],
  ["Набор высоты", "35 м"],
  ["Время", "1ч. 17мин."],
];

const navItems = [
  ["Лента", HomeShape],
  ["Новинки", CompassShape],
  ["Запись", RecordShape],
  ["Профиль", ProfileShape],
  ["Тренировка", TrainingShape],
];

export default function App() {
  return (
    <Screen>
      <GlobalStyle />
      <StatusBar>
        <StatusGroup $gap={26}>
          <MessageIcon />
          <SkypeIcon />
          <ChromeIcon />
          <StravaIcon />
        </StatusGroup>
        <StatusGroup $gap={20}>
          <StatusGroup $gap={26}>
            <AlarmIcon />
            <StatusGroup $gap={16}>
              <Network $gap={6}>
                <NetworkType $weight={600}>
                  E
                  <DataArrows />
                </NetworkType>
                <SignalIcon />
              </Network>
              <Network $gap={10}>
                <NetworkType $weight={400}>G</NetworkType>
                <SignalIcon weak />
              </Network>
            </StatusGroup>
            <BatteryIcon />
          </StatusGroup>
          <StatusGroup $gap={26}>
            <BatteryLevel>36 %</BatteryLevel>
            <Clock>13:42</Clock>
          </StatusGroup>
        </StatusGroup>
      </StatusBar>

      <Header>
        <Toolbar>
          <Title>Лента</Title>
          <ToolbarActions>
            <ToolbarButton aria-label="Друзья">
              <PeopleIcon />
            </ToolbarButton>
            <ToolbarButton aria-label="Уведомления">
              <BellIcon />
              <Badge>
                <BadgeFrame />
                <BadgeCount>3</BadgeCount>
              </Badge>
            </ToolbarButton>
          </ToolbarActions>
        </Toolbar>
        <Tabs role="tablist">
          <Tab role="tab" aria-selected="false">ПОДПИСКИ</Tab>
          <Tab role="tab" aria-selected="true" $active>ВЫ</Tab>
        </Tabs>
      </Header>

      <Activity>
        <Athlete>
          <Avatar>A</Avatar>
          <AthleteText>
            <AthleteName>Andrey Abakulov</AthleteName>
            <Meta>
              <ShoeIcon />
              Сегодня в 11:24
            </Meta>
          </AthleteText>
        </Athlete>
        <ActivityTitle>1.11.20</ActivityTitle>
        <Stats>
          {stats.map(([label, value]) => (
            <Stat key={label}>
              <StatLabel>{label}</StatLabel>
              <StatValue>{value}</StatValue>
            </Stat>
          ))}
        </Stats>
        <MapLink href="#map" aria-label="Карта">
          <ContourMap />
        </MapLink>
        <Actions>
          <Action aria-label="Нравится"><ThumbIcon /></Action>
          <Action aria-label="Комментировать"><CommentIcon /></Action>
          <Action aria-label="Поделиться"><ShareIcon /></Action>
        </Actions>
      </Activity>

      <BottomNav>
        {navItems.map(([label, Shape], i) => (
          <NavItem key={label} href="#nav" $active={i === 0}>
            <NavIcon><Shape /></NavIcon>
            {label}
          </NavItem>
        ))}
      </BottomNav>
    </Screen>
  );
}
